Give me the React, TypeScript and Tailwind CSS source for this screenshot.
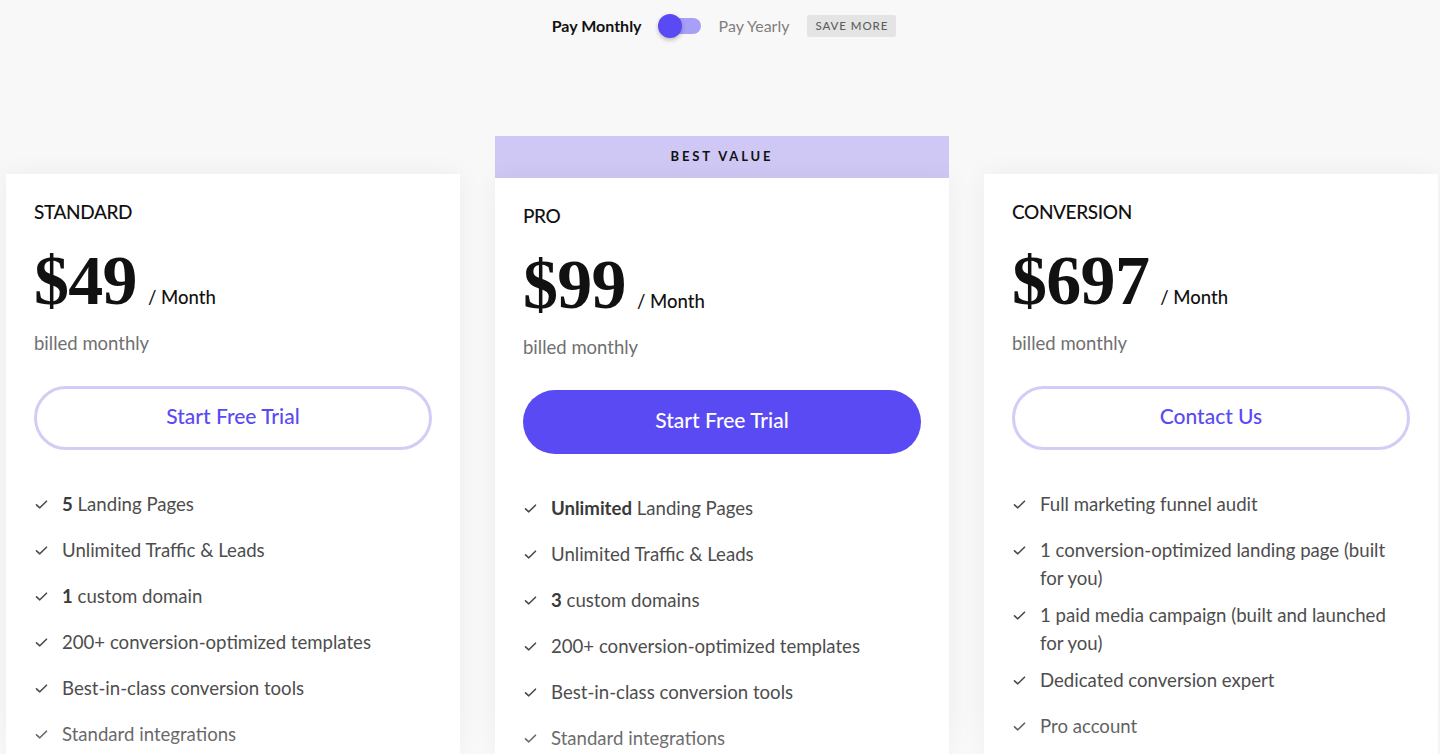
import React from "react";

type Feature = { bold?: string; text: string };

type Plan = {
  name: string;
  price: string;
  cta: string;
  primary?: boolean;
  badge?: string;
  features: Feature[];
};

const plans: Plan[] = [
  {
    name: "STANDARD",
    price: "$49",
    cta: "Start Free Trial",
    features: [
      { bold: "5", text: " Landing Pages" },
      { text: "Unlimited Traffic & Leads" },
      { bold: "1", text: " custom domain" },
      { text: "200+ conversion-optimized templates" },
      { text: "Best-in-class conversion tools" },
      { text: "Standard integrations" },
    ],
  },
  {
    name: "PRO",
    price: "$99",
    cta: "Start Free Trial",
    primary: true,
    badge: "BEST VALUE",
    features: [
      { bold: "Unlimited", text: " Landing Pages" },
      { text: "Unlimited Traffic & Leads" },
      { bold: "3", text: " custom domains" },
      { text: "200+ conversion-optimized templates" },
      { text: "Best-in-class conversion tools" },
      { text: "Standard integrations" },
    ],
  },
  {
    name: "CONVERSION",
    price: "$697",
    cta: "Contact Us",
    features: [
      { text: "Full marketing funnel audit" },
      { text: "1 conversion-optimized landing page (built for you)" },
      { text: "1 paid media campaign (built and launched for you)" },
      { text: "Dedicated conversion expert" },
      { text: "Pro account" },
    ],
  },
];

function Check() {
  return (
    <svg width="13" height="13" viewBox="0 0 13 13" className="mt-[8px] shrink-0" fill="none">
      <path d="M1.5 6.8 L4.8 9.8 L11.5 3.2" stroke="#4a4a4a" strokeWidth="1.6" strokeLinecap="round" strokeLinejoin="round" />
    </svg>
  );
}

function Card({ plan }: { plan: Plan }) {
  return (
    <div className={`w-[454px] shrink-0 flex flex-col ${plan.badge ? "mt-[136px]" : "mt-[174px]"}`}>
      {plan.badge && (
        <div className="h-[42px] bg-[#cfc8f5] flex items-center justify-center text-[13px] font-bold tracking-[0.22em] text-[#111]">
          {plan.badge}
        </div>
      )}
      <div className="bg-white shadow-[0_0_24px_rgba(0,0,0,0.05)] px-[28px] pt-[24px] pb-[60px] flex-1">
        <div className="text-[19px] leading-[28px] text-[#111] font-medium tracking-[-0.02em]">{plan.name}</div>
        <div className="mt-[20px] flex items-baseline">
          <span className="text-[70px] leading-none font-bold text-[#111] tracking-[-0.01em] [font-family:'Liberation_Serif','Times_New_Roman',serif]">
            {plan.price}
          </span>
          <span className="ml-[11px] text-[18.5px] text-[#111] font-medium">/ Month</span>
        </div>
        <div className="mt-[13px] text-[18.5px] leading-[28px] text-[#707070]">billed monthly</div>
        <button
          className={`mt-[29px] w-full h-[64px] rounded-full text-[21px] font-medium flex items-center justify-center pb-[5px] ${
            plan.primary
              ? "bg-[#5a4af4] text-white"
              : "bg-white border-[3px] border-[#d3cdf6] text-[#5a4af4]"
          }`}
        >
          {plan.cta}
        </button>
        <ul className="mt-[40px] flex flex-col gap-[9px]">
          {plan.features.map((f, i) => (
            <li key={i} className="min-h-[37px] flex gap-[14px] pl-[1px] text-[18.6px] leading-[28px] text-[#4d4d4d]">
              <Check />
              <span>
                {f.bold && <span className="font-bold text-[#3a3a3a]">{f.bold}</span>}
                {f.text}
              </span>
            </li>
          ))}
        </ul>
      </div>
    </div>
  );
}

export default function App() {
  return (
    <div className="relative h-[754px] overflow-hidden bg-[#f8f8f8] [font-family:Lato,'Open_Sans',sans-serif]">
      <div className="pt-[14px] flex items-center justify-center pl-[8px]">
        <span className="text-[16px] font-bold text-[#111]">Pay Monthly</span>
        <div className="ml-[16px] relative w-[43px] h-[24px] flex items-center">
          <div className="ml-[13px] w-[30px] h-[16px] rounded-r-full bg-[#a79ff8]" />
          <div className="absolute left-0 top-0 w-[24px] h-[24px] rounded-full bg-[#5a4af4] shadow-[0_2px_4px_rgba(0,0,0,0.25)]" />
        </div>
        <span className="ml-[18px] text-[16px] text-[#808080]">Pay Yearly</span>
        <span className="ml-[18px] h-[22px] px-[8px] flex items-center bg-[#e4e4e4] text-[11.5px] tracking-[0.08em] text-[#5e5e5e] font-medium rounded-[2px]">
          SAVE MORE
        </span>
      </div>
      <div className="flex items-start gap-[35px] pl-[6px] -mt-[38px]">
        {plans.map((p) => (
          <Card key={p.name} plan={p} />
        ))}
      </div>
      <div className="pointer-events-none absolute left-0 right-0 bottom-0 h-[50px] bg-gradient-to-b from-transparent to-white/25" />
    </div>
  );
}
